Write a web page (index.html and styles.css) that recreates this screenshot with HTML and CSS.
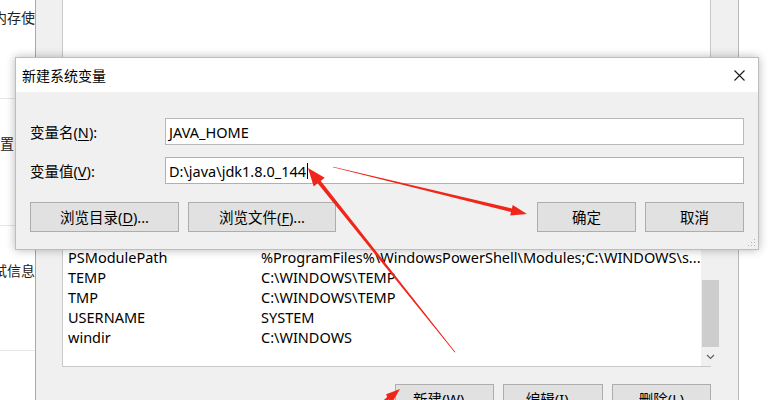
FILE: index.html
```html
<!DOCTYPE html>
<html lang="zh-CN">
<head>
<meta charset="utf-8">
<title>新建系统变量</title>
<link rel="stylesheet" href="styles.css">
</head>
<body>
<div class="desk">
  <aside class="page-strip">
    <div class="strip-item item-1"><span>内存使</span></div>
    <div class="strip-sep sep-1"></div>
    <div class="strip-item item-2"><span>置</span></div>
    <div class="strip-sep sep-2"></div>
    <div class="strip-item item-3"><span>试信息</span></div>
    <div class="strip-sep sep-3"></div>
  </aside>

  <section class="env-window">
    <div class="var-list">
      <div class="rows">
        <div class="row"><span class="name">PSModulePath</span><span class="value">%ProgramFiles%\WindowsPowerShell\Modules;C:\WINDOWS\s...</span></div>
        <div class="row"><span class="name">TEMP</span><span class="value">C:\WINDOWS\TEMP</span></div>
        <div class="row"><span class="name">TMP</span><span class="value">C:\WINDOWS\TEMP</span></div>
        <div class="row"><span class="name">USERNAME</span><span class="value">SYSTEM</span></div>
        <div class="row"><span class="name">windir</span><span class="value">C:\WINDOWS</span></div>
      </div>
      <div class="scrollbar">
        <div class="track"></div>
        <div class="thumb"></div>
        <div class="scroll-down">
          <svg width="9" height="6" viewBox="0 0 9 6"><path d="M1 1 L4.5 4.5 L8 1" fill="none" stroke="#606060" stroke-width="1.2"/></svg>
        </div>
      </div>
    </div>
    <div class="list-actions">
      <button class="btn btn-list">新建(<u>W</u>)...</button>
      <button class="btn btn-list">编辑(<u>I</u>)...</button>
      <button class="btn btn-list">删除(<u>L</u>)</button>
    </div>
  </section>

  <div class="desk-right"></div>
</div>

<div class="dialog">
  <header class="dialog-title">
    <span class="title-text">新建系统变量</span>
    <span class="close">
      <svg width="11" height="11" viewBox="0 0 11 11"><path d="M0.5 0.5 L10.5 10.5 M10.5 0.5 L0.5 10.5" stroke="#1a1a1a" stroke-width="1.1" fill="none"/></svg>
    </span>
  </header>
  <div class="dialog-body">
    <div class="field">
      <label class="field-label">变量名(<u>N</u>):</label>
      <div class="input">JAVA_HOME</div>
    </div>
    <div class="field">
      <label class="field-label">变量值(<u>V</u>):</label>
      <div class="input input-focus">D:\java\jdk1.8.0_144<span class="caret"></span></div>
    </div>
    <div class="dialog-actions">
      <div class="action-group">
        <button class="btn btn-browse">浏览目录(<u>D</u>)...</button>
        <button class="btn btn-browse">浏览文件(<u>F</u>)...</button>
      </div>
      <div class="action-group">
        <button class="btn btn-main">确定</button>
        <button class="btn btn-main">取消</button>
      </div>
    </div>
  </div>
  <svg class="grip" width="8" height="8" viewBox="0 0 8 8">
    <rect x="6" y="0" width="1" height="1" fill="#b5b5b5"/>
    <rect x="3" y="3" width="1" height="1" fill="#b5b5b5"/>
    <rect x="6" y="3" width="1" height="1" fill="#b5b5b5"/>
    <rect x="0" y="6" width="1" height="1" fill="#b5b5b5"/>
    <rect x="3" y="6" width="1" height="1" fill="#b5b5b5"/>
    <rect x="6" y="6" width="1" height="1" fill="#b5b5b5"/>
  </svg>
</div>

<svg class="annotations" width="775" height="400" viewBox="0 0 775 400">
  <g fill="#f0261b">
    <polygon points="455.3,352 454.7,352.4 317.6,183.3 313.7,186.5 308,168 324.7,177.7 320.8,180.9"/>
    <polygon points="332.9,167.3 333.1,166.7 511.9,208.5 512.7,204.9 527,214 510.2,215.6 511,212"/>
    <polygon points="374,409 376,411 388.6,399.5 392.5,401.8 400,389 386.1,394.2 387.2,397"/>
  </g>
</svg>
</body>
</html>
```

FILE: styles.css
```css
* { box-sizing: border-box; }

html, body {
  margin: 0;
  padding: 0;
}

body {
  width: 775px;
  height: 400px;
  overflow: hidden;
  position: relative;
  background: #ffffff;
  font-family: "Noto Sans", "Noto Sans CJK SC", sans-serif;
  font-size: 14.5px;
  color: #000;
}

u { text-decoration: underline; text-underline-offset: 2px; }

.desk {
  display: flex;
  height: 400px;
  overflow: hidden;
}

/* left page strip (window behind, cut off) */
.page-strip {
  width: 35px;
  flex: none;
  overflow: hidden;
  display: flex;
  flex-direction: column;
  font-family: "Noto Sans CJK SC", sans-serif;
  font-size: 14px;
  color: #222;
}
.strip-item {
  display: flex;
  justify-content: flex-end;
  white-space: nowrap;
  height: 20px;
  line-height: 20px;
  flex: none;
}
.item-1 { margin-top: 7px; }
.sep-1 { margin-top: 71px; }
.item-2 { justify-content: flex-start; margin-top: 34px; }
.sep-2 { margin-top: 72px; }
.item-3 { margin-top: 34px; }
.sep-3 { margin-top: 70px; }
.strip-sep {
  height: 1px;
  background: #e6e6e6;
  flex: none;
}

/* environment variables window */
.env-window {
  width: 704px;
  flex: none;
  background: #f0f0f0;
  border-left: 1px solid #a8a8a8;
  border-right: 1px solid #b8b8b8;
  padding: 0 27px 0 26px;
  display: flex;
  flex-direction: column;
}
.var-list {
  flex: none;
  margin-top: -2px;
  height: 369px;
  background: #fff;
  border: 1px solid #c9c9c9;
  display: flex;
}
.rows {
  flex: 1;
  padding: 248px 0 0 5px;
  display: flex;
  flex-direction: column;
}
.row {
  display: flex;
  height: 20px;
  line-height: 20px;
  white-space: nowrap;
  flex: none;
}
.name { width: 193px; flex: none; }
.value { overflow: hidden; }

.scrollbar {
  width: 19px;
  flex: none;
  margin: 200px 1px 0 0;
  display: flex;
  flex-direction: column;
  background: #f0f0f0;
}
.track { flex: 1; }
.thumb {
  height: 67px;
  flex: none;
  background: #cdcdcd;
  margin: 0 1px;
}
.scroll-down {
  height: 19px;
  flex: none;
  display: flex;
  align-items: center;
  justify-content: center;
}

.list-actions {
  flex: none;
  display: flex;
  justify-content: flex-end;
  gap: 9px;
  margin-top: 17px;
}

.desk-right { flex: 1; background: #fff; }

/* buttons */
.btn {
  font-family: "Noto Sans", "Noto Sans CJK SC", sans-serif;
  font-size: 14.5px;
  color: #000;
  background: #e1e1e1;
  border: 1px solid #adadad;
  border-radius: 0;
  padding: 0;
  height: 30px;
  line-height: 28px;
  text-align: center;
  flex: none;
}
.btn-list { width: 99px; }
.btn-list:nth-child(2) { width: 100px; }

/* dialog */
.dialog {
  position: absolute;
  left: 15px;
  top: 57px;
  width: 744px;
  height: 193px;
  background: #f0f0f0;
  border: 1px solid #bdbdbd;
  box-shadow: 0 0 9px rgba(0, 0, 0, 0.28);
  display: flex;
  flex-direction: column;
}
.dialog-title {
  height: 34px;
  flex: none;
  background: #fff;
  display: flex;
  align-items: center;
  justify-content: space-between;
  padding: 0 13px 0 6px;
  font-family: "Noto Sans CJK SC", sans-serif;
  font-size: 14px;
}
.close { display: flex; }

.dialog-body {
  padding: 26px 14px 0 14px;
  display: flex;
  flex-direction: column;
}
.field {
  display: flex;
  align-items: center;
  margin-bottom: 12px;
}
.field-label {
  width: 135px;
  flex: none;
  font-family: "Noto Sans", "Noto Sans CJK SC", sans-serif;
  font-size: 14.5px;
}
.input {
  flex: 1;
  height: 27px;
  line-height: 24px;
  background: #fff;
  border: 1px solid #b9b9b9;
  padding: 0 3px;
  white-space: nowrap;
  display: flex;
  align-items: center;
}
.input-focus { border-color: #8ab9e6; }
.caret {
  display: inline-block;
  width: 1px;
  height: 16px;
  background: #000;
  margin-left: 1px;
}

.dialog-actions {
  display: flex;
  justify-content: space-between;
  margin-top: 6px;
}
.action-group { display: flex; gap: 9px; }
.btn-browse { width: 149px; }
.btn-browse:nth-child(2) { width: 148px; }
.btn-main { width: 99px; }

.grip {
  position: absolute;
  right: 2px;
  bottom: 2px;
}

.annotations {
  position: absolute;
  left: 0;
  top: 0;
  pointer-events: none;
}
```
